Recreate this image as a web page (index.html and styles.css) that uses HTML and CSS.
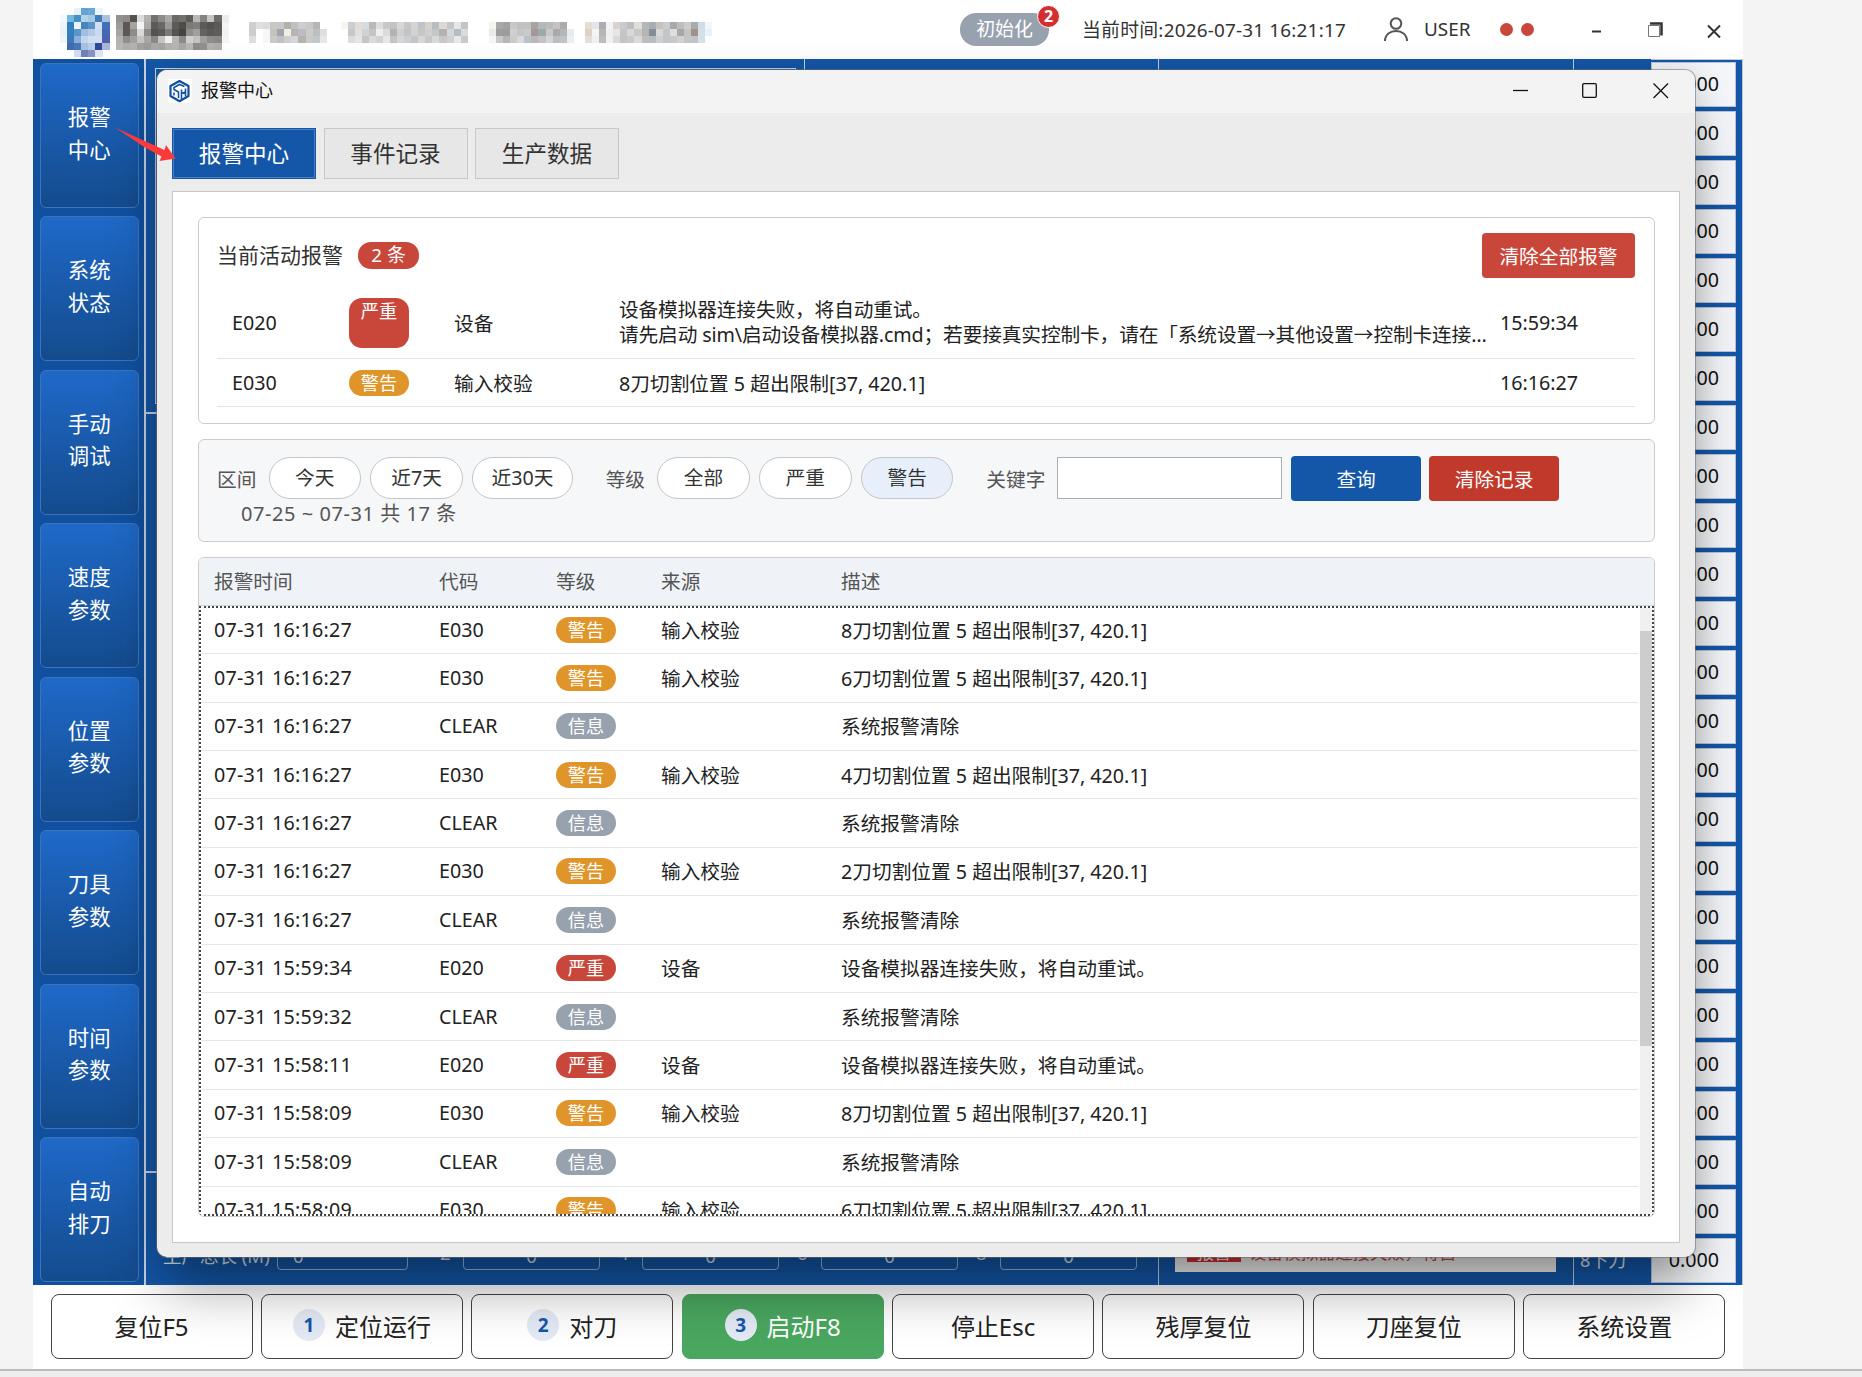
FILE: index.html
```html
<!DOCTYPE html>
<html lang="zh-CN">
<head>
    <meta charset="utf-8">
    <title>报警中心</title>
    <link rel="stylesheet" href="styles.css">
</head>
<body>

<div class="app">
    <div class="header">
        <svg class="brand" id="brand" width="660" height="58" shape-rendering="crispEdges"></svg>
        <div class="state">初始化<span class="state-num">2</span></div>
        <div class="clock">当前时间:2026-07-31 16:21:17</div>
        <svg class="user-icon" width="24" height="25" viewBox="0 0 24 25" fill="none" stroke="#555" stroke-width="2">
            <circle cx="12" cy="6.5" r="5.3"/>
            <path d="M1 24C1 10.500 23 10.500 23 24"/>
        </svg>
        <div class="user">USER</div>
        <i class="dot"></i>
        <i class="dot"></i>
        <svg class="win-btns" width="130" height="18" viewBox="0 0 130 18" fill="none" stroke="#333">
            <path d="M1 9.500h9" stroke-width="2"/>
            <path d="M57.500 3.500h11v11h-11z" stroke="#777" stroke-width="1"/>
            <path d="M59 1.500h11.500v12" stroke-width="2.500"/>
            <path d="M117 3.500l12 12M129 3.500l-12 12" stroke-width="2"/>
        </svg>
    </div>

    <div class="middle">
        <div class="sidebar">
            <div class="side-btn">报警<br>中心</div>
            <div class="side-btn">系统<br>状态</div>
            <div class="side-btn">手动<br>调试</div>
            <div class="side-btn">速度<br>参数</div>
            <div class="side-btn">位置<br>参数</div>
            <div class="side-btn">刀具<br>参数</div>
            <div class="side-btn">时间<br>参数</div>
            <div class="side-btn">自动<br>排刀</div>
        </div>
        <div class="work">
            <div class="work-top">
                <div class="work-view"><div class="view-box"></div></div>
                <div class="work-side"></div>
            </div>
            <div class="work-mid"></div>
            <div class="work-bottom">
                <span class="len-label">生产总长 (M)</span>
                <div class="num first">0</div>
                <span class="no">2</span>
                <div class="num">0</div>
                <span class="no">4</span>
                <div class="num">0</div>
                <span class="no">6</span>
                <div class="num">0</div>
                <span class="no">8</span>
                <div class="num">0</div>
            </div>
        </div>
        <div class="log">
            <div class="log-box">
                <span class="log-tag">报警</span>
                <span class="log-text">设备模拟器连接失败，将自</span>
            </div>
        </div>
        <div class="names">8下刀</div>
        <div class="values" id="values"></div>
    </div>

    <div class="footer">
        <div class="foot-btn">复位F5</div>
        <div class="foot-btn"><b>1</b>定位运行</div>
        <div class="foot-btn"><b>2</b>对刀</div>
        <div class="foot-btn green"><b>3</b>启动F8</div>
        <div class="foot-btn">停止Esc</div>
        <div class="foot-btn">残厚复位</div>
        <div class="foot-btn">刀座复位</div>
        <div class="foot-btn">系统设置</div>
    </div>
</div>
<div class="base"></div>

<!-- 报警中心窗口 -->
<div class="window">
    <div class="titlebar">
        <svg class="win-icon" width="24" height="24" viewBox="0 0 24 24">
            <rect width="24" height="24" fill="#fff"/>
            <path d="M11.500 2L20.500 7v10l-9 5.200L2.500 17V7z" fill="none" stroke="#12509c" stroke-width="2.200" stroke-linejoin="round"/>
            <path d="M16.500 7.500L11.500 5.500 6 8.500v2l4.500 2.500v6M13.500 20v-9.500M13.500 14.500l4-1.500M17.500 9.500v8M6 13.500v3" fill="none" stroke="#15559f" stroke-width="1.600"/>
        </svg>
        <span class="win-title">报警中心</span>
        <svg class="win-ctrl" width="156" height="16" viewBox="0 0 156 16" fill="none" stroke="#111" stroke-width="1.300">
            <path d="M0 7.500h15"/>
            <rect x="69.700" y="0.700" width="13.600" height="13.600" rx="1.200"/>
            <path d="M140.500 0.500l14.500 14.500M155 0.500L140.500 15"/>
        </svg>
    </div>
    <div class="tabs">
        <div class="tab active">报警中心</div>
        <div class="tab">事件记录</div>
        <div class="tab">生产数据</div>
    </div>
    <div class="panel">
        <div class="current">
            <div class="current-head">
                <span class="current-title">当前活动报警</span>
                <span class="count">2 条</span>
                <button type="button" class="clear-all">清除全部报警</button>
            </div>
            <div class="alarm tall">
                <span>E020</span>
                <span class="tag red">严重</span>
                <span>设备</span>
                <span class="msg">设备模拟器连接失败，将自动重试。<br>请先启动 sim\启动设备模拟器.cmd；若要接真实控制卡，请在「系统设置→其他设置→控制卡连接…</span>
                <span>15:59:34</span>
            </div>
            <div class="alarm">
                <span>E030</span>
                <span class="tag orange">警告</span>
                <span>输入校验</span>
                <span>8刀切割位置 5 超出限制[37, 420.1]</span>
                <span>16:16:27</span>
            </div>
        </div>

        <div class="filter">
            <div class="filter-row">
                <label>区间</label>
                <span class="chip">今天</span>
                <span class="chip">近7天</span>
                <span class="chip wide">近30天</span>
                <label class="level">等级</label>
                <span class="chip">全部</span>
                <span class="chip">严重</span>
                <span class="chip on">警告</span>
                <label class="key">关键字</label>
                <input type="text" class="key-input">
                <button type="button" class="query">查询</button>
                <button type="button" class="clear-log">清除记录</button>
            </div>
            <div class="summary">07-25 ~ 07-31 共 17 条</div>
        </div>

        <div class="history">
            <div class="row head"><span>报警时间</span><span>代码</span><span>等级</span><span>来源</span><span>描述</span></div>
            <div class="list">
                <div class="rows">
                    <div class="row"><span class="time">07-31 16:16:27</span><span>E030</span><span class="tag orange">警告</span><span>输入校验</span><span>8刀切割位置 5 超出限制[37, 420.1]</span></div>
                    <div class="row"><span class="time">07-31 16:16:27</span><span>E030</span><span class="tag orange">警告</span><span>输入校验</span><span>6刀切割位置 5 超出限制[37, 420.1]</span></div>
                    <div class="row"><span class="time">07-31 16:16:27</span><span>CLEAR</span><span class="tag gray">信息</span><span></span><span>系统报警清除</span></div>
                    <div class="row"><span class="time">07-31 16:16:27</span><span>E030</span><span class="tag orange">警告</span><span>输入校验</span><span>4刀切割位置 5 超出限制[37, 420.1]</span></div>
                    <div class="row"><span class="time">07-31 16:16:27</span><span>CLEAR</span><span class="tag gray">信息</span><span></span><span>系统报警清除</span></div>
                    <div class="row"><span class="time">07-31 16:16:27</span><span>E030</span><span class="tag orange">警告</span><span>输入校验</span><span>2刀切割位置 5 超出限制[37, 420.1]</span></div>
                    <div class="row"><span class="time">07-31 16:16:27</span><span>CLEAR</span><span class="tag gray">信息</span><span></span><span>系统报警清除</span></div>
                    <div class="row"><span class="time">07-31 15:59:34</span><span>E020</span><span class="tag red">严重</span><span>设备</span><span>设备模拟器连接失败，将自动重试。</span></div>
                    <div class="row"><span class="time">07-31 15:59:32</span><span>CLEAR</span><span class="tag gray">信息</span><span></span><span>系统报警清除</span></div>
                    <div class="row"><span class="time">07-31 15:58:11</span><span>E020</span><span class="tag red">严重</span><span>设备</span><span>设备模拟器连接失败，将自动重试。</span></div>
                    <div class="row"><span class="time">07-31 15:58:09</span><span>E030</span><span class="tag orange">警告</span><span>输入校验</span><span>8刀切割位置 5 超出限制[37, 420.1]</span></div>
                    <div class="row"><span class="time">07-31 15:58:09</span><span>CLEAR</span><span class="tag gray">信息</span><span></span><span>系统报警清除</span></div>
                    <div class="row"><span class="time">07-31 15:58:09</span><span>E030</span><span class="tag orange">警告</span><span>输入校验</span><span>6刀切割位置 5 超出限制[37, 420.1]</span></div>
                </div>
                <div class="scroll"><div class="thumb"></div></div>
            </div>
        </div>
    </div>
</div>

<!-- 指向标签页的红色箭头 -->
<svg class="arrow" width="62" height="36" viewBox="0 0 62 36">
    <path d="M0 0.500L49.500 23 51 18 60.500 31.500 44.500 34 46.500 29.500 30 20.500z" fill="#fb3a3a"/>
</svg>

<script type="text/javascript">
    /*右侧数值列*/
    var values = document.getElementById("values");
    for(var i = 0; i < 25; i++){
        var cell = document.createElement("div");
        cell.className = "value";
        cell.innerHTML = "0.000";
        values.appendChild(cell);
    }

    /*顶部的马赛克色块，每格约7px*/
    var size = 7.07;
    function mosaic(x, y, rows){
        var html = "";
        for(var r = 0; r < rows.length; r++){
            var cols = rows[r].split(" ");
            for(var c = 0; c < cols.length; c++){
                if(cols[c] == "-") continue;
                html += '<rect x="' + (x + c * size) + '" y="' + (y + r * size) + '" width="7.2" height="7.2" fill="#' + cols[c] + '"/>';
            }
        }
        document.getElementById("brand").innerHTML += html;
    }

    mosaic(27, 6.5, [
        "- - e8f3f9 64a3d2 6ca8d6 eef4fa -",
        "f4fafc 74b9dd 4291c9 b2d4e8 a3c9e5 427bb8 a9c0df",
        "eef5fa 3280c0 e9f5f8 4a84bf 5c93c8 d1def0 4070b5",
        "e6f1f8 3480c0 5d95ca a0bee0 b5c9e5 c9d9ef 4469b0",
        "f0f5fa 3c79b9 88b0dc c2d5ec d1ddf0 d1ddf0 4a62a9",
        "- 4069b0 4a75b5 a8c0e0 b8cbe8 2d4994 aab3d8",
        "- - d3daec 6d82b9 8890c4 dfe2ef -"
    ]);
    mosaic(82.5, 13.6, [
        "92918f 8b8a88 555250 dcdcdc b2b1af 72706e 8e8c8a a9a8a6 6b6967 74726f 5f5d5a b9b8b7 85837f c5c4c3 6d6b69 ececec",
        "9c9b99 5b5855 a6a4a2 f4f4f4 aaa9a7 5c5957 6a6765 9b9998 5c5956 4f4c49 7c7a77 82807e 5c5956 55524f 5c5956 f4f4f4",
        "a5a4a2 5b5855 8e8c8a dad9d8 8c8a88 55524f 5c5956 7b7977 55524f 46433f 918f8d a19f9d 65625f 5c5956 605d5b f2f2f2",
        "b3b2b1 8f8d8b a3a19f c4c3c2 a8a6a5 8a8886 c4c3c2 efefef b6b5b3 8d8b89 d0cfce c2c1bf a19f9d 8f8d8b 8a8886 f4f4f4",
        "b8b7b6 aeadab b2b1af a3a19f 9e9c9a aaa8a6 a6a4a2 b2b1af b5b4b2 aaa8a6 b8b7b6 8f8d8b 92908e b2b1af aeadab -"
    ]);
    mosaic(216, 20.7, [
        "cfcfd0 dfdfe0 dcdcdc c9c8c4 c6c8c8 b4b0ad bdc0c5 cdcecf c8c9ca b3b5b9 -",
        "cccdce - f7f7f7 c6c4bd a3a3a9 eeeeea bdb1ac b9bcc3 d0ccc4 bcbfc2 dedfe0",
        "dedede - f7f7f7 c9c9c9 c1c1c5 cfcfcf d5d6d8 b3b3b2 cacaca c2c7c9 e5e6e7"
    ]);
    mosaic(307.5, 20.7, [
        "f9f4ef cdced1 e2dbd8 d8dbdf bcb8b5 dbdddf c8c7c7 c2c3c5 d7d7d7 c5c7c9 d2d4d6 bec4c9 d8d2ce babdc0 ddd8d6 c5c6c8 e5e6e7 c2c4c7",
        "- c6c7ca e4dfdc d0d2d5 c8c4c1 efeeec dadbdc b7b0ac ced0d2 c3c4c6 d2d2d2 c4c8ca cfcfcf c5c6c8 b8b0ab d5d8da b9bcbf dadbdc",
        "- dcdddf e6e5e5 c4c5c7 dadada d1d2d3 e7e7e8 c4c4c4 d7d6d6 cdced0 c3c6c8 d8d7d5 c6c7c9 d7d8d9 c7c8ca d0d0d0 e7e8e9 c8c9ca"
    ]);
    mosaic(456, 20.7, [
        "f7f3ef aaa9a7 a3a2a0 c9c8c6 bfc1c3 c5c0bc a5a4a3 b4b8b8 babbbc c6c3c0 aaabad -",
        "ece9e7 9e9d9b 9c9c9c d0d0cf c3c6ca c7cacd a59697 9daaa9 c9c9ca a7a9ac b5b6b8 e5eaee",
        "f5f5f5 c9c9c9 b6b6b7 cecac6 d9dadb bbc1c6 b7b9bb c3c3c3 d4d5d6 bcbfc2 c4c3c2 eceff2"
    ]);
    mosaic(552, 20.7, [
        "e7ddd5 e3e5e8 aaaeb2 f3f3f3 d9d2ce c8cacd bcbfc3 e0dedc b4b7ba a8adb1 c5c1bf c8cdd2 a8a9aa bcbec1 d1cbc7 a8abae d1dce5 f3f6f9",
        "dbd2ca f5f5f5 b8b6b4 eeeff0 e8e5e3 c3c5c7 dad8d7 c8c8c9 b8b4b1 878d95 d8d8d8 c2c6c9 dfdedd a9a8a7 c1c5ca a1918a d6dfe8 e9f1f8",
        "e1dfdd f0f0f0 b9bdc0 f0f0ef d8dadc c6c4c3 c8cbce dcdad8 babec2 b9bbbd cfcfcf c1c7cb c8c9ca d2d1d0 c4c5c7 bfc4c8 dbdfe3 -"
    ]);
</script>
</body>
</html>
```
FILE: styles.css
```css
*{
    padding: 0;
    margin: 0;
    box-sizing: border-box;
}

body{
    width: 1862px;
    height: 1377px;
    overflow: hidden;
    position: relative;
    background-color: #f4f4f4;
    font-family: "Noto Sans", "Noto Sans CJK SC", sans-serif;
    font-size: 19.7px;
    color: #222;
}

button,input{
    font-family: inherit;
    font-size: inherit;
}

.app{
    width: 1710px;
    height: 1369px;
    margin-left: 33px;
    background-color: #fff;
}

.base{
    height: 8px;
    border-top: 2px solid #bbb;
    background-color: #eee;
}

/*顶部*/
.header{
    display: flex;
    align-items: center;
    height: 59px;
    font-size: 18.9px;
    color: #333;
}

.brand{
    width: 680px;
    margin-right: 247px;
    flex-shrink: 0;
}

.state{
    position: relative;
    width: 89px;
    height: 33px;
    line-height: 32px;
    border-radius: 16px;
    text-align: center;
    background-color: #98a1ae;
    color: #fff;
}

.state-num{
    position: absolute;
    top: -8px;
    right: -11px;
    width: 23px;
    height: 23px;
    line-height: 20px;
    border: 1.5px solid #fff;
    border-radius: 50%;
    font-size: 16px;
    font-weight: bold;
    background-color: #d32f2f;
}

.clock{
    width: 270px;
    margin-left: 33px;
    padding-bottom: 2px;
    white-space: nowrap;
    letter-spacing: 0.2px;
}

.user-icon{
    margin-left: 32px;
}

.user{
    width: 76px;
    margin-left: 16px;
    padding-bottom: 2px;
}

.dot{
    width: 13px;
    height: 13px;
    margin-right: 8px;
    border-radius: 50%;
    background-color: #c8473a;
}

.win-btns{
    margin-left: 48.500px;
    margin-top: 3px;
}

/*中间蓝色区域*/
.middle{
    display: flex;
    height: 1226px;
    background-color: #1457a8;
}

.sidebar{
    display: flex;
    flex-direction: column;
    gap: 8.45px;
    width: 113px;
    padding: 4px 5.500px 0 7px;
    border-right: 2px solid #c6d2e4;
    background-color: #10509f;
}

.side-btn{
    height: 145px;
    padding-top: 37px;
    border: 1px solid #3b74bd;
    border-radius: 6px;
    background: linear-gradient(#1f69c8, #144b8d);
    color: #fff;
    font-size: 21.4px;
    line-height: 32.5px;
    text-align: center;
}

.work{
    width: 1013px;
    border-right: 1px solid #c6d2e4;
}

.work-top{
    display: flex;
    height: 355px;
    border-bottom: 2px solid #c6d2e4;
}

.work-view{
    width: 659px;
    padding: 9px 8px 8px 9px;
    border-right: 1px solid #c6d2e4;
}

.view-box{
    height: 100%;
    border: 1px solid #c6d2e4;
}

.work-mid{
    height: 759px;
    border-bottom: 2px solid #c6d2e4;
}

.work-bottom{
    display: flex;
    align-items: flex-end;
    height: 97px;
    padding-left: 17px;
    color: #dfe6ee;
    font-size: 18.5px;
}

.len-label{
    width: 114px;
    white-space: nowrap;
    line-height: 28px;
}

.num{
    width: 137px;
    height: 38px;
    line-height: 46px;
    border: 1px solid #9fb4d2;
    border-radius: 4px;
    text-align: center;
}

.num.first{
    width: 131px;
    padding-left: 15px;
    text-align: left;
}

.no{
    width: 42px;
    padding-left: 18px;
    line-height: 34px;
}

.num.first + .no{
    width: 55px;
    padding-left: 32px;
}

.log{
    display: flex;
    align-items: flex-end;
    width: 415px;
    padding: 0 17px 13px 16px;
    border-right: 1px solid #c6d2e4;
}

.log-box{
    display: flex;
    align-items: flex-end;
    gap: 8px;
    width: 381px;
    height: 60px;
    padding: 0 0 10px 12px;
    background-color: #f4f4f4;
    font-size: 17.3px;
    line-height: 18px;
}

.log-tag{
    width: 54px;
    background-color: #d32f2f;
    color: #fff;
    text-align: center;
}

.log-text{
    color: #c8473a;
}

.names{
    display: flex;
    align-items: flex-end;
    width: 77px;
    padding: 0 0 13px 6px;
    color: #dfe6ee;
    font-size: 18px;
}

.values{
    width: 92px;
    padding: 2px 6px 0 0;
    border-top: 1px solid #c6ccd6;
    border-right: 1px solid #b9c8de;
}

.value{
    height: 45px;
    margin-bottom: 4px;
    padding-right: 16px;
    border: 1px solid #b8c4d6;
    background-color: #f3f5f8;
    color: #111;
    line-height: 41px;
    text-align: right;
}

/*底部按钮*/
.footer{
    display: flex;
    gap: 8.4px;
    padding: 8.500px 17px 0 17.500px;
}

.foot-btn{
    display: flex;
    flex-shrink: 0;
    align-items: center;
    justify-content: center;
    width: 202px;
    height: 65px;
    padding-bottom: 2px;
    border: 1px solid #444;
    border-radius: 8px;
    font-size: 24px;
}

.foot-btn b{
    width: 32px;
    height: 32px;
    margin-right: 10px;
    border-radius: 50%;
    background-color: #e3eaf5;
    color: #1457a8;
    font-size: 19px;
    line-height: 32px;
    text-align: center;
}

.foot-btn.green{
    border-color: #4ba862;
    background-color: #4aa75f;
    color: #fff;
}

/*报警中心窗口*/
.window{
    position: absolute;
    left: 157px;
    top: 70px;
    width: 1538px;
    height: 1187px;
    border-radius: 10px;
    background-color: #ececec;
    box-shadow: 0 0 0 1px rgba(110, 110, 110, 0.55),
                0 0 30px rgba(0, 0, 0, 0.14),
                0 38px 54px -8px rgba(0, 0, 0, 0.38);
}

.titlebar{
    display: flex;
    align-items: center;
    height: 43px;
    padding: 0 0 1px 11px;
    border-radius: 10px 10px 0 0;
    background-color: #f3f3f3;
    color: #111;
    font-size: 18px;
}

.win-title{
    flex: 1;
    margin-left: 9px;
    line-height: 24px;
    padding-bottom: 2px;
}

.win-ctrl{
    margin-right: 26px;
}

.tabs{
    display: flex;
    gap: 7.5px;
    padding: 15px 15px 12px;
}

.tab{
    width: 144px;
    height: 51px;
    border: 1px solid #c8c8c8;
    background-color: #e7e7e7;
    color: #333;
    font-size: 22.6px;
    line-height: 50px;
    text-align: center;
}

.tab.active{
    border-color: #1457a8;
    background-color: #1457a8;
    box-shadow: inset 0 0 0 1px #4a7fbf;
    color: #fff;
}

.panel{
    width: 1508px;
    height: 1052px;
    margin-left: 15px;
    padding: 25px 24.500px 25px 25px;
    border: 1px solid #c8c8c8;
    background-color: #fff;
}

.tag{
    width: 60px;
    height: 26px;
    border-radius: 13px;
    color: #fff;
    font-size: 18.2px;
    line-height: 26px;
    text-align: center;
}

.red{
    background-color: #c8473a;
}

.orange{
    background-color: #e0952a;
}

.gray{
    background-color: #98a1ae;
}

.current{
    height: 207px;
    padding: 15px 18.500px 0 18px;
    border: 1px solid #ccc;
    border-radius: 6px;
}

.current-head{
    display: flex;
    align-items: center;
    height: 45px;
}

.current-title{
    color: #333;
    font-size: 21px;
    line-height: 28px;
    padding-bottom: 2px;
}

.count{
    width: 61px;
    height: 27px;
    margin-left: 15px;
    border-radius: 13px;
    background-color: #c8473a;
    color: #fff;
    font-size: 18.8px;
    line-height: 26px;
    text-align: center;
}

.clear-all{
    width: 153px;
    height: 45px;
    margin-left: auto;
    border: none;
    border-radius: 4px;
    background-color: #c8473a;
    color: #fff;
}

.alarm{
    display: grid;
    grid-template-columns: 117px 105px 165px 881px 1fr;
    align-items: center;
    height: 48px;
    padding-left: 15px;
    border-bottom: 1px solid #e4e4e4;
}

.alarm.tall{
    height: 81px;
    padding-top: 9px;
}

.alarm.tall .tag{
    height: 50px;
}

.msg{
    white-space: nowrap;
    line-height: 24.7px;
    letter-spacing: -0.13px;
}

.filter{
    height: 103px;
    margin-top: 15px;
    padding: 15.500px 18px 0;
    border: 1px solid #ccc;
    border-radius: 6px;
    background-color: #f6f7f9;
}

.filter-row{
    display: flex;
    align-items: center;
    height: 45px;
}

.filter label{
    width: 43px;
    margin-right: 8.500px;
    color: #555;
}

.filter .level{
    margin-left: 23.500px;
}

.filter .key{
    width: 63px;
    margin-left: 23.500px;
    margin-right: 8px;
}

.chip{
    width: 92.500px;
    height: 42px;
    margin-right: 9.4px;
    border: 1px solid #c6c6c6;
    border-radius: 21px;
    background-color: #fff;
    color: #333;
    line-height: 39px;
    text-align: center;
}

.chip.wide{
    width: 100.500px;
}

.chip.on{
    background-color: #e7effb;
}

.key-input{
    width: 225px;
    height: 42px;
    border: 1px solid #abadb3;
    background-color: #fff;
}

.query,.clear-log{
    width: 129.500px;
    height: 45px;
    margin-left: 9px;
    border: none;
    border-radius: 4px;
    background-color: #1457a8;
    color: #fff;
}

.clear-log{
    margin-left: 8.500px;
    background-color: #c0392b;
}

.summary{
    padding-left: 24px;
    color: #555;
    font-size: 20px;
    line-height: 26px;
    letter-spacing: 0.55px;
}

/*历史记录表*/
.history{
    height: 660px;
    margin-top: 15px;
    border: 1px solid #ccc;
    border-radius: 6px;
    overflow: hidden;
}

.row{
    display: grid;
    grid-template-columns: 225px 117px 105px 180px 1fr;
    align-items: center;
    height: 48.4px;
    padding: 0 0 1px 13px;
    border-bottom: 1px solid #e6e6e6;
}

.row.head{
    height: 48px;
    padding: 0 0 2px 15px;
    border-bottom-color: #d4d6da;
    background-color: #eff3f8;
    color: #555;
}

.row .tag{
    margin-top: 1px;
}

.time{
    letter-spacing: 0.25px;
}

.list{
    display: flex;
    height: 610px;
    overflow: hidden;
    border: 2px dotted #444;
}

.rows{
    flex: 1;
    margin-top: -2.200px;
    margin-right: 2px;
}

.scroll{
    width: 12px;
    padding-top: 23px;
    background-color: #f0f0f0;
}

.thumb{
    height: 415px;
    background-color: #cdcdcd;
}

.arrow{
    position: absolute;
    left: 115px;
    top: 127px;
}
```
